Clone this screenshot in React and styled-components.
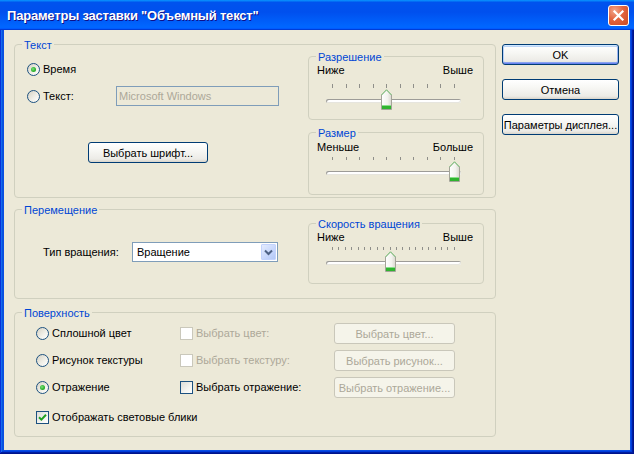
import React from 'react';
import styled, { createGlobalStyle } from 'styled-components';

const font = `"Liberation Sans", Arial, sans-serif`;

const GlobalStyle = createGlobalStyle`
  html, body {
    margin: 0;
    padding: 0;
    overflow: hidden;
    background: #ffffff;
  }
  body {
    font-family: ${font};
    font-size: 11px;
    color: #000000;
  }
  * {
    box-sizing: border-box;
  }
`;

const Window = styled.div`
  width: 634px;
  height: 454px;
  display: flex;
  flex-direction: column;
  background: #0a4fe4;
  box-shadow: inset -1px -1px #00138c, inset 1px 1px #0831d9,
    inset -2px -2px #001ea0, inset 2px 2px #166aee, inset -3px -3px #003bda,
    inset 3px 3px #0855dd;
`;

const TitleBar = styled.div`
  height: 30px;
  flex: none;
  display: flex;
  align-items: center;
  justify-content: space-between;
  padding: 0 5px 0 7px;
  background: linear-gradient(
    180deg,
    #0997ff,
    #0053ee 8%,
    #0050ee 40%,
    #0066ff 88%,
    #0066ff 93%,
    #005bff 95%,
    #003dd7 96%,
    #003dd7
  );
`;

const Title = styled.span`
  color: #ffffff;
  font: bold 13px ${font};
  letter-spacing: -0.2px;
  text-shadow: 1px 1px 0 #0f1089;
  padding-top: 1px;
`;

const CloseButton = styled.div`
  width: 21px;
  height: 21px;
  border: 1px solid #ffffff;
  border-radius: 3px;
  display: flex;
  align-items: center;
  justify-content: center;
  background: radial-gradient(circle at 30% 25%, #f2a58a 0%, #e2643f 45%, #cc4a22 100%);
`;

const Client = styled.div`
  flex: 1;
  margin: 0 4px 4px 4px;
  background: #ece9d8;
  display: flex;
  padding: 14px 0 0 10px;
`;

const MainColumn = styled.div`
  width: 482px;
  display: flex;
  flex-direction: column;
`;

const ButtonColumn = styled.div`
  width: 117px;
  margin-left: 6px;
  display: flex;
  flex-direction: column;
  gap: 14px;
`;

const Group = styled.div`
  position: relative;
  display: flex;
  flex: none;
  height: ${(p) => p.$h}px;
  margin-top: ${(p) => p.$mt || 0}px;
  border: 1px solid #d0d0bf;
  border-radius: 4px;
`;

const Caption = styled.span`
  position: absolute;
  top: -6px;
  left: 7px;
  padding: 0 2px;
  line-height: 13px;
  color: #0046d5;
  background: #ece9d8;
`;

const LeftPane = styled.div`
  flex: 1;
  display: flex;
  flex-direction: column;
  align-items: flex-start;
  padding: ${(p) => p.$pt}px 0 0 ${(p) => p.$pl}px;
`;

const RightPane = styled.div`
  width: 176px;
  margin-right: 11px;
  display: flex;
  flex-direction: column;
`;

const Row = styled.div`
  display: flex;
  align-items: center;
  height: ${(p) => p.$h || 13}px;
  margin-top: ${(p) => p.$mt || 0}px;
`;

const Option = styled.label`
  display: flex;
  align-items: center;
  gap: 3px;
  width: ${(p) => (p.$w ? `${p.$w}px` : 'auto')};
  line-height: 13px;
  color: ${(p) => (p.$disabled ? '#aca899' : '#000000')};
`;

const RadioMark = styled.span`
  position: relative;
  flex: none;
  width: 13px;
  height: 13px;
  border-radius: 50%;
  border: 1px solid #1c5180;
  background: linear-gradient(135deg, #d6d2c4 0%, #f2f1ea 60%, #ffffff 100%);

  &::after {
    content: '';
    display: ${(p) => (p.$checked ? 'block' : 'none')};
    position: absolute;
    left: 3px;
    top: 3px;
    width: 5px;
    height: 5px;
    border-radius: 50%;
    background: radial-gradient(circle at 40% 40%, #7fe07f 0%, #2db42d 55%, #1e8f1e 100%);
  }
`;

const CheckMark = styled.span`
  flex: none;
  width: 13px;
  height: 13px;
  display: flex;
  align-items: center;
  justify-content: center;
  border: 1px solid ${(p) => (p.$disabled ? '#cac8bb' : '#1c5180')};
  background: ${(p) =>
    p.$disabled ? '#ffffff' : 'linear-gradient(135deg, #dcdcd7 0%, #f4f4f0 60%, #ffffff 100%)'};
`;

const Radio = ({ checked, children, w }) => (
  <Option $w={w}>
    <RadioMark $checked={checked} />
    {children}
  </Option>
);

const Check = ({ checked, disabled, children, w }) => (
  <Option $w={w} $disabled={disabled}>
    <CheckMark $disabled={disabled}>
      {checked && (
        <svg width="9" height="9" viewBox="0 0 9 9">
          <path d="M1 4.2 L3.4 6.6 L8 1.8" fill="none" stroke="#21a121" strokeWidth="2" />
        </svg>
      )}
    </CheckMark>
    {children}
  </Option>
);

const Button = styled.div`
  flex: none;
  width: ${(p) => p.$w}px;
  height: 21px;
  margin-top: ${(p) => p.$mt || 0}px;
  margin-left: ${(p) => p.$ml || 0}px;
  display: flex;
  align-items: center;
  justify-content: center;
  border-radius: 3px;
  border: 1px solid ${(p) => (p.$disabled ? '#c9c7ba' : '#003c74')};
  color: ${(p) => (p.$disabled ? '#aca899' : '#000000')};
  background: ${(p) =>
    p.$disabled
      ? '#f5f4ea'
      : 'linear-gradient(180deg, #ffffff 0%, #f7f7f4 40%, #ecebe6 85%, #d8d4ca 100%)'};
  box-shadow: ${(p) =>
    p.$default
      ? 'inset 0 1px #cee7ff, inset 0 -1px #6982ee, inset 1px 0 #b8d0f8, inset -1px 0 #9bb4f2, inset 0 2px #bcd4f6, inset 0 -2px #89a4ef'
      : 'none'};
  white-space: nowrap;
`;

const TextInput = styled.div`
  width: 163px;
  height: 20px;
  display: flex;
  align-items: center;
  padding-left: 2px;
  border: 1px solid #7f9db9;
  color: #aca899;
  background: #ece9d8;
`;

const Select = styled.div`
  width: 146px;
  height: 20px;
  display: flex;
  align-items: center;
  padding: 1px;
  border: 1px solid #7f9db9;
  background: #ffffff;
`;

const SelectText = styled.span`
  flex: 1;
  padding-left: 3px;
`;

const DropButton = styled.span`
  width: 15px;
  height: 16px;
  display: flex;
  align-items: center;
  justify-content: center;
  border: 1px solid #c3d3fd;
  border-radius: 1px;
  background: linear-gradient(135deg, #e4ecfe 0%, #c6d6fc 60%, #b3c8f6 100%);
`;

const FieldLabel = styled.span`
  width: 89px;
  line-height: 13px;
`;

const SliderBox = styled.div`
  display: flex;
  flex-direction: column;
  width: 100%;
  padding-top: ${(p) => p.$pt}px;
`;

const SliderLabels = styled.div`
  display: flex;
  justify-content: space-between;
  line-height: 13px;
  padding: 0 10px 0 8px;
`;

const Ticks = styled.div`
  display: flex;
  justify-content: space-between;
  margin: ${(p) => p.$mt}px 22px 0 17px;
  padding: 0 6px;
`;

const Tick = styled.span`
  width: 1px;
  height: ${(p) => p.$h}px;
  background: #8f8f8a;
`;

const TrackArea = styled.div`
  position: relative;
  height: 21px;
  margin: 1px 22px 0 17px;
`;

const Track = styled.div`
  height: 4px;
  margin-top: 10px;
  border-radius: 2px;
  background: #ffffff;
  box-shadow: inset 1px 1px #9d9c98, inset -1px -1px #e6e5de;
`;

const Thumb = styled.svg`
  position: absolute;
  top: 0;
`;

const Slider = ({ id, lo, hi, ticks, value, pt, tickGap, tickH }) => (
  <SliderBox $pt={pt}>
    <SliderLabels>
      <span>{lo}</span>
      <span>{hi}</span>
    </SliderLabels>
    <Ticks $mt={tickGap}>
      {Array.from({ length: ticks }).map((_, i) => (
        <Tick key={i} $h={tickH} />
      ))}
    </Ticks>
    <TrackArea>
      <Track />
      <Thumb
        width="11"
        height="21"
        viewBox="0 0 11 21"
        style={{ left: Math.round(6 + (value / (ticks - 1)) * 122 - 5) }}
      >
        <defs>
          <linearGradient id={id} x1="0" y1="0" x2="1" y2="0">
            <stop offset="0" stopColor="#ffffff" />
            <stop offset="0.6" stopColor="#f3f3ee" />
            <stop offset="1" stopColor="#d9d8cf" />
          </linearGradient>
        </defs>
        <path d="M0.5 20.5 V6 L5.5 0.8 L10.5 6 V20.5 Z" fill={`url(#${id})`} stroke="#a3a398" />
        <path d="M0.5 6 L5.5 0.8 L10.5 6" fill="none" stroke="#7acb7a" />
        <rect x="1" y="16" width="9" height="1" fill="#8adf8a" />
        <rect x="1" y="17" width="9" height="3" fill="#2fb42f" />
      </Thumb>
    </TrackArea>
  </SliderBox>
);

const SurfaceGrid = styled.div`
  display: grid;
  grid-template-columns: 144px 154px 121px;
  grid-auto-rows: 21px;
  row-gap: 6px;
  align-items: center;
`;

export default function App() {
  return (
    <>
      <GlobalStyle />
      <Window>
        <TitleBar>
          <Title>Параметры заставки "Объемный текст"</Title>
          <CloseButton>
            <svg width="13" height="13" viewBox="0 0 13 13">
              <path d="M2.5 2.5 L10.5 10.5 M10.5 2.5 L2.5 10.5" stroke="#ffffff" strokeWidth="2.2" strokeLinecap="square" />
            </svg>
          </CloseButton>
        </TitleBar>
        <Client>
          <MainColumn>
            <Group $h={154}>
              <Caption>Текст</Caption>
              <LeftPane $pt={18} $pl={12}>
                <Row>
                  <Radio checked>Время</Radio>
                </Row>
                <Row $h={20} $mt={10}>
                  <Radio w={89}>Текст:</Radio>
                  <TextInput>Microsoft Windows</TextInput>
                </Row>
                <Button $w={120} $mt={36} $ml={61}>
                  Выбрать шрифт...
                </Button>
              </LeftPane>
              <RightPane>
                <Group $h={64} $mt={11}>
                  <Caption>Разрешение</Caption>
                  <Slider id="g1" lo="Ниже" hi="Выше" ticks={10} value={4} pt={7} tickGap={7} tickH={4} />
                </Group>
                <Group $h={63} $mt={12}>
                  <Caption>Размер</Caption>
                  <Slider id="g2" lo="Меньше" hi="Больше" ticks={10} value={9} pt={8} tickGap={3} tickH={3} />
                </Group>
              </RightPane>
            </Group>

            <Group $h={90} $mt={11}>
              <Caption>Перемещение</Caption>
              <LeftPane $pt={32} $pl={28}>
                <Row $h={20}>
                  <FieldLabel>Тип вращения:</FieldLabel>
                  <Select>
                    <SelectText>Вращение</SelectText>
                    <DropButton>
                      <svg width="9" height="7" viewBox="0 0 9 7">
                        <path d="M1 1.5 L4.5 5 L8 1.5" fill="none" stroke="#4d6185" strokeWidth="2" />
                      </svg>
                    </DropButton>
                  </Select>
                </Row>
              </LeftPane>
              <RightPane>
                <Group $h={61} $mt={13}>
                  <Caption>Скорость вращения</Caption>
                  <Slider id="g3" lo="Ниже" hi="Выше" ticks={20} value={9} pt={7} tickGap={3} tickH={3} />
                </Group>
              </RightPane>
            </Group>

            <Group $h={125} $mt={13}>
              <Caption>Поверхность</Caption>
              <LeftPane $pt={10} $pl={21}>
                <SurfaceGrid>
                  <Radio>Сплошной цвет</Radio>
                  <Check disabled>Выбрать цвет:</Check>
                  <Button $w={121} $disabled>
                    Выбрать цвет...
                  </Button>
                  <Radio>Рисунок текстуры</Radio>
                  <Check disabled>Выбрать текстуру:</Check>
                  <Button $w={121} $disabled>
                    Выбрать рисунок...
                  </Button>
                  <Radio checked>Отражение</Radio>
                  <Check>Выбрать отражение:</Check>
                  <Button $w={121} $disabled>
                    Выбрать отражение...
                  </Button>
                </SurfaceGrid>
                <Row $mt={13}>
                  <Check checked>Отображать световые блики</Check>
                </Row>
              </LeftPane>
            </Group>
          </MainColumn>

          <ButtonColumn>
            <Button $w={117} $default>
              OK
            </Button>
            <Button $w={117}>Отмена</Button>
            <Button $w={117}>Параметры дисплея...</Button>
          </ButtonColumn>
        </Client>
      </Window>
    </>
  );
}
